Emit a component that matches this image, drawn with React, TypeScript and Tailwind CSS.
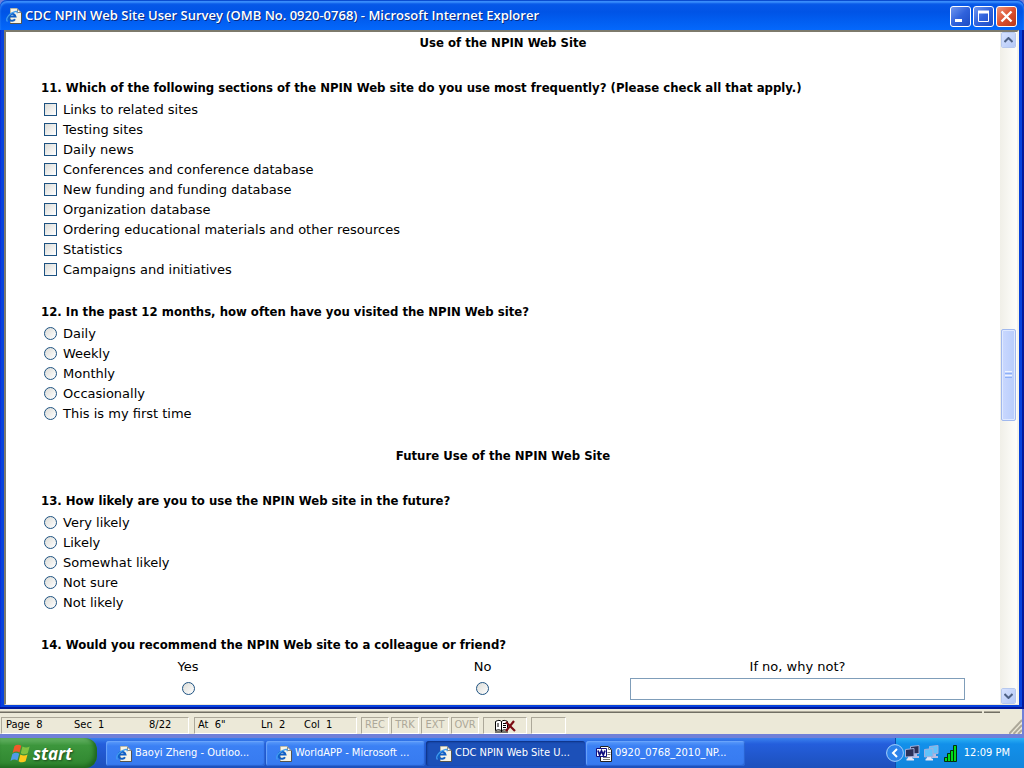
import React from "react";

const sections = [
  "Links to related sites",
  "Testing sites",
  "Daily news",
  "Conferences and conference database",
  "New funding and funding database",
  "Organization database",
  "Ordering educational materials and other resources",
  "Statistics",
  "Campaigns and initiatives",
];
const frequency = ["Daily", "Weekly", "Monthly", "Occasionally", "This is my first time"];
const likelihood = ["Very likely", "Likely", "Somewhat likely", "Not sure", "Not likely"];

function IePage() {
  return (
    <svg width="16" height="16" viewBox="0 0 16 16" className="shrink-0" aria-hidden="true">
      <path d="M4 1h7.500L15 4.500V15H4z" fill="#f6f4e6" />
      <path d="M4.500 15V.500h7" fill="none" stroke="#b9b7a6" />
      <path d="M4 15.500h11.500V4.500" fill="none" stroke="#55544c" />
      <path d="M11.500 1v3.500H15z" fill="#fff" stroke="#8c8b80" />
      <path d="M9 11.300A3.500 3.500 0 1 1 9.500 8.600H3.500" fill="none" stroke="#0f5fc4" strokeWidth="2" />
      <path d="M1.500 13.500C-1 11 3.500 4.500 10 3.300c1.200-.2 1.400.9.800 2" fill="none" stroke="#3f9cf0" strokeWidth="1.200" />
    </svg>
  );
}

function WordPage() {
  return (
    <svg width="16" height="16" viewBox="0 0 16 16" className="shrink-0" aria-hidden="true">
      <path d="M4.500.500h8l3 3v12h-11z" fill="#fff" stroke="#222" />
      <path d="M12.500.5v3h3M11.500 6.500h3M11.500 8.500h3M7 13.500h7M7 11.500h7" fill="none" stroke="#777" />
      <path d="M.5 2.500h10v8H.5z" fill="#fff" stroke="#101080" />
      <path d="M2 4.500l1.600 4.500L5.500 5l1.800 4L9 4.500" fill="none" stroke="#101080" strokeWidth="1.800" />
    </svg>
  );
}

function WindowsFlag() {
  return (
    <svg width="20" height="19" viewBox="0 2 17 15" className="shrink-0" aria-hidden="true">
      <path d="M3.800 3.200c2-1.500 4-1.400 5.800-.3L8.100 8.700C6.300 7.500 4.300 7.600 2.200 9z" fill="#f1592a" />
      <path d="M10.600 3.500c2 1.200 4 1.300 6.100 0L15.100 9.300c-2.100 1.300-4.100 1.200-6-.1z" fill="#7fc241" />
      <path d="M2 10c2-1.400 4-1.400 5.800-.3l-1.500 5.800C4.500 14.300 2.500 14.400.4 15.800z" fill="#4f9be8" />
      <path d="M8.800 10.300c2 1.200 4 1.300 6.100 0l-1.600 5.800c-2.100 1.300-4.100 1.200-6-.1z" fill="#fcc81c" />
    </svg>
  );
}

function Network({ screen }: { screen: string }) {
  return (
    <svg width="15" height="16" viewBox="0 0 15 16" className="shrink-0" aria-hidden="true">
      <path d="M8 9h4v2h2v2H7z" fill="#b9bee2" />
      <path d="M5.500 1.500l8.500-1v8l-8.500.500z" fill={screen} stroke="#a3b0dc" />
      <path d="M3 11h4v2l2 1v1.500H1.500V14L3 13z" fill="#e4e6f6" />
      <path d="M.5 4.500l8.500-1v8l-8.500.500z" fill={screen} stroke="#a3b0dc" />
    </svg>
  );
}

function Choice({ type, name, label }: { type: "checkbox" | "radio"; name: string; label: string }) {
  return (
    <label className="flex h-5 items-center gap-1.5 pb-px">
      <input
        type={type}
        name={name}
        className={
          "size-[13px] shrink-0 appearance-none border border-[#1d5281] bg-linear-to-br from-[#dcdcd7] to-white checked:bg-[#21a121] " +
          (type === "radio" ? "rounded-full" : "")
        }
      />
      <span>{label}</span>
    </label>
  );
}

const boldText = "font-['DejaVu_Sans_Condensed','DejaVu_Sans',sans-serif] font-bold";

function Question({ title, type, name, options }: { title: string; type: "checkbox" | "radio"; name: string; options: string[] }) {
  return (
    <fieldset>
      <legend className={"mb-0.5 h-5 whitespace-nowrap " + boldText}>{title}</legend>
      <div className="flex flex-col items-start pl-[3px]">
        {options.map((o) => (
          <Choice key={o} type={type} name={name} label={o} />
        ))}
      </div>
    </fieldset>
  );
}

function CaptionButton({ label, close, children }: { label: string; close?: boolean; children: React.ReactNode }) {
  return (
    <button
      type="button"
      aria-label={label}
      className={
        "flex size-[21px] items-center justify-center rounded-[3px] border border-white bg-linear-to-br " +
        (close ? "from-[#ee9478] via-[#dc5030] to-[#b8381a]" : "from-[#7096ee] via-[#3062dc] to-[#1c4cc4]")
      }
    >
      <svg width="19" height="19" viewBox="0 0 19 19" aria-hidden="true">
        {children}
      </svg>
    </button>
  );
}

function ScrollButton({ label, d }: { label: string; d: string }) {
  return (
    <button
      type="button"
      aria-label={label}
      className="flex h-4 w-[15px] items-center justify-center rounded-[2px] border border-white bg-linear-to-br from-[#d6e2ff] to-[#b4c8f6] outline outline-[#b6c8ee] -outline-offset-1"
    >
      <svg width="9" height="6" viewBox="0 0 9 6" aria-hidden="true">
        <path d={d} fill="none" stroke="#4d6185" strokeWidth="2" />
      </svg>
    </button>
  );
}

function Task({ label, active, word }: { label: string; active?: boolean; word?: boolean }) {
  return (
    <button
      type="button"
      className={
        "flex h-[25px] w-[159px] items-center gap-[3px] rounded-[3px] px-2.5 text-left text-white " +
        (active
          ? "bg-[#1c50b8] shadow-[inset_1px_1px_2px_#0c2f80]"
          : "bg-linear-to-b from-[#5b9bfa] via-[#3b80f4] via-20% to-[#377af0] shadow-[inset_-1px_-1px_1px_#2862d0,inset_1px_1px_1px_#6ba5fb]")
      }
    >
      {word ? <WordPage /> : <IePage />}
      <span className="whitespace-nowrap">{label}</span>
    </button>
  );
}

const panel = "flex h-[17px] items-center border-t border-l border-[#aca899] border-r border-b border-r-white border-b-white";

function StatusBar() {
  return (
    <div className="flex h-[29px] flex-col border-r-2 border-b-4 border-[#7080d8] bg-[#ece9d8] font-['DejaVu_Sans_Condensed','DejaVu_Sans',sans-serif] text-[11px] text-black">
      <div className="mt-[2px] mr-[22px] flex gap-0.5">
        <div className="h-0.5 flex-1 border-b border-[#716f64] bg-[#aca899]" />
        <div className="h-0.5 w-4 border-b border-[#716f64] bg-[#aca899]" />
      </div>
      <div className="mt-1 flex items-center pl-px">
        <div className={panel + " w-[188px] pl-1"}>
          <span className="w-[68px]">Page&nbsp; 8</span>
          <span className="w-[75px]">Sec&nbsp; 1</span>
          <span>8/22</span>
        </div>
        <div className={panel + " ml-[5px] w-[163px] pl-[3px]"}>
          <span className="w-[63px]">At&nbsp; 6"</span>
          <span className="w-[43px]">Ln&nbsp; 2</span>
          <span>Col&nbsp; 1</span>
        </div>
        <div className="ml-1 flex gap-0.5 text-[#aca899]">
          <span className={panel + " w-7 justify-center"}>REC</span>
          <span className={panel + " w-7 justify-center"}>TRK</span>
          <span className={panel + " w-7 justify-center"}>EXT</span>
          <span className={panel + " w-7 justify-center"}>OVR</span>
        </div>
        <div className={panel + " ml-1 w-11 justify-center"}>
          <svg width="22" height="14" viewBox="0 0 22 14" aria-hidden="true">
            <path d="M1.500 2.500C4 1 6 1 7.500 2.500 9 1 11 1 13.500 2.500v9C11 10.500 9 10.500 7.500 12 6 10.500 4 10.500 1.500 11.500z" fill="#fff" stroke="#000" />
            <path d="M7.500 2.500V13M1 13h13M9 4.500h3M9 6.500h3M9 8.500h3M3 5h2M3 7h2" stroke="#000" fill="none" />
            <path d="M12 3l9 9M20 2l-8 10" stroke="#7c0c14" strokeWidth="2.200" />
          </svg>
        </div>
        <div className={panel + " ml-1 w-[35px]"} />
        <svg width="13" height="15" viewBox="0 0 13 15" className="ml-auto self-end" aria-hidden="true">
          <path d="M0 15L13 1M4.500 15L13 6M9 15l4-4" stroke="#aca899" strokeWidth="2" />
        </svg>
      </div>
    </div>
  );
}

function Taskbar() {
  return (
    <footer className="flex h-[30px] shrink-0 items-center bg-linear-to-b from-[#3a80ee] via-[#245edc] via-20% to-[#1d50bc] font-['DejaVu_Sans_Condensed','DejaVu_Sans',sans-serif] text-[11px]">
      <button
        type="button"
        className="flex h-full w-[97px] items-center gap-[3px] rounded-r-xl bg-linear-to-b from-[#67b467] via-[#3c963c] via-25% to-[#2f852f] pl-2.5 text-white shadow-[inset_-3px_-2px_4px_#1e661e]"
      >
        <WindowsFlag />
        <span className="font-['Open_Sans',sans-serif] text-[17px] leading-none font-bold italic [text-shadow:1px_1px_2px_#1c4a1c]">start</span>
      </button>
      <nav className="ml-[9px] flex gap-px pt-px" aria-label="Open windows">
        <Task label="Baoyi Zheng - Outloo..." />
        <Task label="WorldAPP - Microsoft ..." />
        <Task label="CDC NPIN Web Site U..." active />
        <Task label="0920_0768_2010_NP..." word />
      </nav>
      <div className="ml-auto flex h-full w-[129px] items-center gap-1 border-l border-[#0c4cae] bg-linear-to-b from-[#2cb2f4] via-[#1290ea] via-20% to-[#1286dc] pr-3.5 text-white">
        <button type="button" aria-label="Show hidden icons" className="-mr-[3px] -ml-2.5 shrink-0">
          <svg width="18" height="18" viewBox="0 0 18 18" aria-hidden="true">
            <circle cx="9" cy="9" r="8.400" fill="#2c82ea" stroke="#a5d0fb" />
            <path d="M11 5L7 9l4 4" fill="none" stroke="#fff" strokeWidth="2" />
          </svg>
        </button>
        <Network screen="#2b3158" />
        <Network screen="#63c3fb" />
        <svg width="14" height="17" viewBox="0 0 14 17" className="ml-px shrink-0" aria-hidden="true">
          <path d="M.5 12.500h3v4h-3zM3.500 8.500h3v8h-3zM6.500 5.500h3v11h-3zM9.500.5h3v16h-3z" fill="#00dc1c" stroke="#04300a" />
        </svg>
        <time className="ml-auto whitespace-nowrap">12:09 PM</time>
      </div>
    </footer>
  );
}

export default function App() {
  return (
    <div className="flex h-screen flex-col overflow-hidden bg-[#7080d8]">
      <div className="flex min-h-0 flex-1 flex-col rounded-t-[7px] bg-[#0842dc] shadow-[inset_-2px_-2px_0_#00189c,inset_1px_0_0_#0831d9]">
        <header className="flex h-[30px] shrink-0 items-center rounded-t-[7px] bg-linear-to-b from-[#0a5ae8] via-[#0054e6] via-40% to-[#0468fc] pt-0.5 pr-[7px] pl-1.5 shadow-[inset_0_1px_0_#0a4cd0,inset_0_3px_2px_#3c90fc]">
          <IePage />
          <h1 className="ml-[3px] flex-1 truncate font-['Open_Sans',sans-serif] text-[13px] font-semibold text-white [text-shadow:1px_1px_0_#0a2a80]">
            CDC NPIN Web Site User Survey (OMB No. 0920-0768) - Microsoft Internet Explorer
          </h1>
          <div className="flex gap-0.5 pt-px">
            <CaptionButton label="Minimize">
              <path d="M4 13.500h7" stroke="#fff" strokeWidth="3" />
            </CaptionButton>
            <CaptionButton label="Maximize">
              <path d="M4.500 5v9.500h10V5z" fill="none" stroke="#fff" />
              <path d="M4 5h11" stroke="#fff" strokeWidth="3" />
            </CaptionButton>
            <CaptionButton label="Close" close>
              <path d="M4.500 4.500l10 10M14.500 4.500l-10 10" stroke="#fff" strokeWidth="2.400" />
            </CaptionButton>
          </div>
        </header>

        <div className="mr-[5px] mb-[4px] ml-1 flex min-h-0 flex-1 border-t-2 border-r-2 border-b border-l-2 border-[#7d7a6c] border-r-[#f4f2e8] border-b-[#ece9d8] bg-white">
          <main className="min-w-0 flex-1 overflow-hidden pt-px pr-[35px] pl-[35px] font-['DejaVu_Sans',sans-serif] text-[13px] leading-5 text-black">
            <h2 className={"text-center " + boldText}>Use of the NPIN Web Site</h2>
            <form className="mt-[25px]">
              <Question
                title="11. Which of the following sections of the NPIN Web site do you use most frequently? (Please check all that apply.)"
                type="checkbox"
                name="sections"
                options={sections}
              />
              <div className="mt-[22px]">
                <Question title="12. In the past 12 months, how often have you visited the NPIN Web site?" type="radio" name="frequency" options={frequency} />
              </div>
              <h2 className={"mt-[22px] text-center " + boldText}>Future Use of the NPIN Web Site</h2>
              <div className="mt-[25px]">
                <Question title="13. How likely are you to use the NPIN Web site in the future?" type="radio" name="likelihood" options={likelihood} />
              </div>
              <fieldset className="mt-[22px]">
                <legend className={"mb-0.5 h-5 " + boldText}>14. Would you recommend the NPIN Web site to a colleague or friend?</legend>
                <div className="grid grid-cols-[294fr_295fr_335fr] text-center">
                  {["Yes", "No"].map((o) => (
                    <label key={o} className="flex flex-col items-center gap-[5px]">
                      <span>{o}</span>
                      <input
                        type="radio"
                        name="recommend"
                        className="size-[13px] appearance-none rounded-full border border-[#1d5281] bg-linear-to-br from-[#dcdcd7] to-white checked:bg-[#21a121]"
                      />
                    </label>
                  ))}
                  <label className="flex flex-col items-center gap-px">
                    <span>If no, why not?</span>
                    <input type="text" className="h-[22px] w-full border border-[#7f9db9] bg-white px-1" />
                  </label>
                </div>
              </fieldset>
            </form>
          </main>

          <div className="flex w-[17px] shrink-0 flex-col items-center bg-linear-to-r from-[#f0efe8] to-[#fefefb]">
            <ScrollButton label="Scroll up" d="M.5 5l4-4 4 4" />
            <div className="w-full flex-[280]" />
            <div className="flex h-[92px] w-[15px] flex-col items-center justify-center gap-px rounded-[2px] border border-[#a0b8ee] bg-linear-to-r from-[#cad8fe] to-[#b8cdfc] shadow-[inset_0_0_0_1px_#dfe9ff]">
              <i className="h-px w-[7px] bg-[#eef4fe]" />
              <i className="h-px w-[7px] bg-[#8cb0f8]" />
              <i className="h-px w-[7px] bg-[#eef4fe]" />
              <i className="h-px w-[7px] bg-[#8cb0f8]" />
            </div>
            <div className="w-full flex-[267]" />
            <ScrollButton label="Scroll down" d="M.5 1l4 4 4-4" />
          </div>
        </div>
      </div>
      <StatusBar />
      <Taskbar />
    </div>
  );
}
